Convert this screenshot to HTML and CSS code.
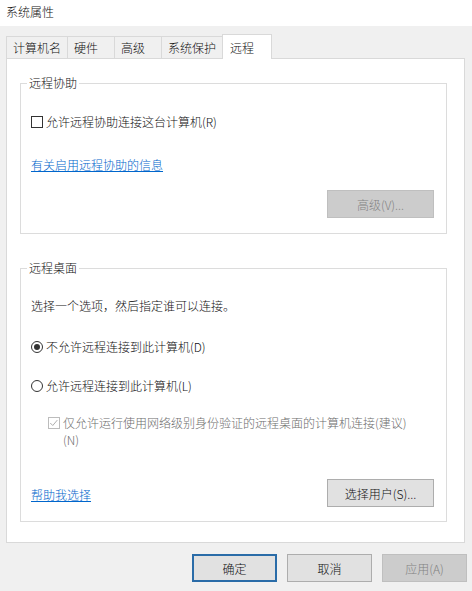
FILE: index.html
```html
<!DOCTYPE html>
<html lang="zh-CN">
<head>
    <meta charset="UTF-8" />
    <title>系统属性</title>
    <link rel="stylesheet" href="styles.css">
</head>
<body>
<div class="window">
    <div class="titlebar">系统属性</div>

    <div class="tabs">
        <div class="tab">计算机名</div>
        <div class="tab">硬件</div>
        <div class="tab">高级</div>
        <div class="tab">系统保护</div>
        <div class="tab active">远程</div>
    </div>

    <div class="panel">
        <!-- 远程协助 -->
        <fieldset class="group group-assist">
            <legend>远程协助</legend>
            <label class="option option-first">
                <span class="check"></span>
                <span>允许远程协助连接这台计算机(R)</span>
            </label>
            <div class="link-row"><a class="link" href="#">有关启用远程协助的信息</a></div>
            <div class="actions actions-end">
                <button class="btn" disabled>高级(V)...</button>
            </div>
        </fieldset>

        <!-- 远程桌面 -->
        <fieldset class="group group-desktop">
            <legend>远程桌面</legend>
            <div class="desc">选择一个选项，然后指定谁可以连接。</div>
            <label class="option option-radio1">
                <span class="radio checked"></span>
                <span>不允许远程连接到此计算机(D)</span>
            </label>
            <label class="option option-radio2">
                <span class="radio"></span>
                <span>允许远程连接到此计算机(L)</span>
            </label>
            <label class="sub-option">
                <span class="check disabled">
                    <svg viewBox="0 0 12 12" width="10" height="10"><polyline points="1.5,6 4.5,9 10,2.5" fill="none" stroke="#a6a6a6" stroke-width="1.1"/></svg>
                </span>
                <span class="sub-text">仅允许运行使用网络级别身份验证的远程桌面的计算机连接(建议)(N)</span>
            </label>
            <div class="actions actions-split">
                <a class="link" href="#">帮助我选择</a>
                <button class="btn">选择用户(S)...</button>
            </div>
        </fieldset>
    </div>

    <div class="footer">
        <button class="btn btn-wide primary">确定</button>
        <button class="btn btn-wide">取消</button>
        <button class="btn btn-wide" disabled>应用(A)</button>
    </div>
</div>
</body>
</html>
```

FILE: styles.css
```css
html, body { margin: 0; padding: 0; }
body {
    width: 472px; height: 591px; overflow: hidden;
    background: #f0f0f0;
    font-family: "Noto Sans CJK SC", "Noto Sans", sans-serif;
    font-size: 12px; font-weight: 300; color: #111;
}
.window { width: 472px; height: 591px; }
.titlebar { height: 26px; line-height: 24px; padding-left: 6px; background: #fff; }

/* tabs */
.tabs { display: flex; align-items: flex-end; height: 24px; margin-top: 8px; padding-left: 6px; }
.tab {
    box-sizing: border-box; min-width: 48px; height: 22px; padding: 0 6px;
    line-height: 21px; background: #f0f0f0;
    border: 1px solid #d9d9d9; border-bottom: none; margin-right: -1px;
}
.tab.active {
    position: relative; z-index: 1;
    min-width: 50px; height: 25px; margin-bottom: -1px; padding: 2px 7px 0;
    background: #fff;
}

/* panel */
.panel {
    box-sizing: border-box; height: 485px; margin: 0 7px 0 6px;
    padding: 0 17px 0 13px;
    background: #fff; border: 1px solid #d9d9d9;
}
.group { margin: 0; padding: 0 12px 0 10px; border: 1px solid #dcdcdc; }
.group legend { margin-left: -4px; padding: 0 2px; line-height: 16px; }
.group-assist { margin-top: 16px; padding-bottom: 15px; }
.group-desktop { margin-top: 26px; padding-bottom: 14px; }

.option { display: flex; align-items: center; height: 20px; line-height: 20px; }
.option-first { margin-top: 21px; }
.option-radio1 { margin-top: 21px; }
.option-radio2 { margin-top: 19px; }
.desc { margin-top: 20px; line-height: 20px; }

.check {
    box-sizing: border-box; width: 12px; height: 12px; margin-right: 3px;
    border: 1px solid #333; background: #fff;
    display: flex; align-items: center; justify-content: center;
}
.check.disabled { border-color: #bcbcbc; }
.radio {
    box-sizing: border-box; width: 12px; height: 12px; margin-right: 3px;
    border: 1px solid #333; border-radius: 50%; background: #fff;
    display: flex; align-items: center; justify-content: center;
}
.radio.checked::after { content: ""; width: 6px; height: 6px; border-radius: 50%; background: #333; }

.sub-option { display: flex; margin-top: 18px; padding-left: 17px; line-height: 17px; color: #6d6d6d; }
.sub-option .check { margin-top: 3px; flex: none; }
.sub-text { max-width: 352px; }

.link-row { margin-top: 23px; line-height: 20px; }
.link { color: #0066cc; text-decoration: underline; }

.actions { display: flex; align-items: center; }
.actions-end { justify-content: flex-end; margin-top: 15px; }
.actions-split { justify-content: space-between; margin-top: 31px; }
.actions-split .link { padding-top: 3px; }

/* buttons */
.btn {
    box-sizing: border-box; width: 107px; height: 28px; padding: 0;
    font-family: inherit; font-size: 12px; font-weight: 300; color: #111;
    background: #e1e1e1; border: 1px solid #adadad;
}
.btn:disabled { background: #cccccc; border-color: #bfbfbf; color: #838383; }
.btn-wide { width: 85px; }
.btn.primary { border: 2px solid #2a6ca8; }

.footer { display: flex; justify-content: flex-end; gap: 10px; margin-top: 11px; padding-right: 5px; }
```
